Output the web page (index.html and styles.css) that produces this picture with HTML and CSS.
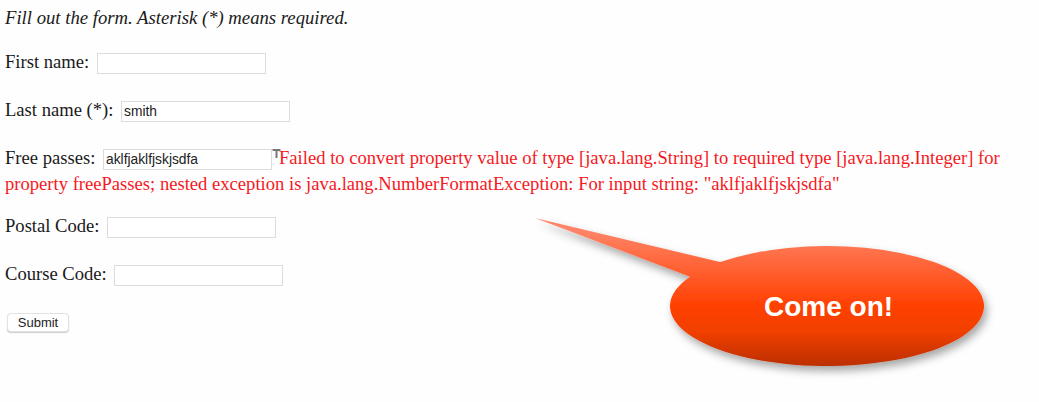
FILE: index.html
```html
<!DOCTYPE html>
<html lang="en">
<head>
<meta charset="utf-8">
<title>Student form</title>
<link rel="stylesheet" href="styles.css">
</head>
<body>
<form class="form">
  <p class="row intro"><i>Fill out the form. Asterisk (*) means required.</i></p>
  <p class="row"><label>First name: <input class="field" type="text"></label></p>
  <p class="row"><label>Last name (*): <input class="field" type="text" value="smith"></label></p>
  <p class="row row-error"><label>Free passes: <input class="field" type="text" value="aklfjaklfjskjsdfa"></label><span class="cursor-wrap"><svg class="cursor" width="10" height="10" viewBox="0 0 10 10" aria-hidden="true"><path d="M0.5 1H8.5M4.5 1V9" stroke="#777" stroke-width="2" fill="none"/></svg></span><span class="error">Failed to convert property value of type [java.lang.String] to required type [java.lang.Integer] for property freePasses; nested exception is java.lang.NumberFormatException: For input string: "aklfjaklfjskjsdfa"</span></p>
  <p class="row"><label>Postal Code: <input class="field" type="text"></label></p>
  <p class="row row-last"><label>Course Code: <input class="field" type="text"></label></p>
  <p class="row submit-row"><button class="submit" type="button">Submit</button></p>
</form>
<div class="callout">
  <svg class="bubble" width="520" height="190" viewBox="0 0 520 190" aria-hidden="true">
    <defs>
      <linearGradient id="fill" gradientUnits="userSpaceOnUse" x1="0" y1="30" x2="0" y2="166">
        <stop offset="0" stop-color="#ff8468"/>
        <stop offset="0.55" stop-color="#ff4102"/>
        <stop offset="0.75" stop-color="#f03f00"/>
        <stop offset="1" stop-color="#bb2f03"/>
      </linearGradient>
      <filter id="shadow" x="-10%" y="-20%" width="125%" height="150%">
        <feDropShadow dx="3" dy="5" stdDeviation="4" flood-color="#000" flood-opacity="0.35"/>
      </filter>
    </defs>
    <path filter="url(#shadow)" fill="url(#fill)" d="M15 18L200 62.1A157 60 0 1 1 170 76.7Z"/>
  </svg>
  <span class="callout-text">Come on!</span>
</div>
</body>
</html>
```
FILE: styles.css
```css
html, body {
  margin: 0;
  height: 100%;
  overflow: hidden;
  background: #fefefe;
}
body {
  padding: 0 5px;
  font-family: "Liberation Serif", "Times New Roman", serif;
  font-size: 18.6px;
  line-height: 26px;
  color: #1a1a1a;
  box-sizing: border-box;
}
.form {
  padding-top: 5px;
}
.row {
  margin: 0 0 22px;
}
.intro {
  margin-bottom: 18px;
  font-size: 18.7px;
}
.row-error {
  margin-bottom: 16px;
}
.row-last {
  margin-bottom: 21px;
}
.field {
  box-sizing: border-box;
  width: 169px;
  height: 21px;
  margin-left: 3px;
  padding: 1px 2px;
  border: 1px solid #dcdcdc;
  background: #fff;
  font-family: "Liberation Sans", Arial, sans-serif;
  font-size: 13.8px;
  color: #222;
  outline: none;
}
.cursor-wrap {
  position: relative;
}
.cursor {
  position: absolute;
  left: 0;
  top: 2px;
}
.error {
  color: #f5191f;
  margin-left: 7px;
}
.submit-row {
  padding-left: 2px;
}
.submit {
  width: 62px;
  height: 19px;
  padding: 0;
  border: 1px solid #e2e2e2;
  border-radius: 4px;
  background: #fff;
  box-shadow: 0 1px 1px #ccc;
  font-family: "Liberation Sans", Arial, sans-serif;
  font-size: 13px;
  color: #222;
}
.callout {
  position: absolute;
  left: 520px;
  top: 200px;
  width: 520px;
  height: 190px;
}
.bubble {
  display: block;
}
.callout-text {
  position: absolute;
  left: 244px;
  top: 91px;
  font-family: "Liberation Sans", Arial, sans-serif;
  font-size: 28px;
  line-height: 32px;
  font-weight: 700;
  color: #fff;
  white-space: nowrap;
}
```
